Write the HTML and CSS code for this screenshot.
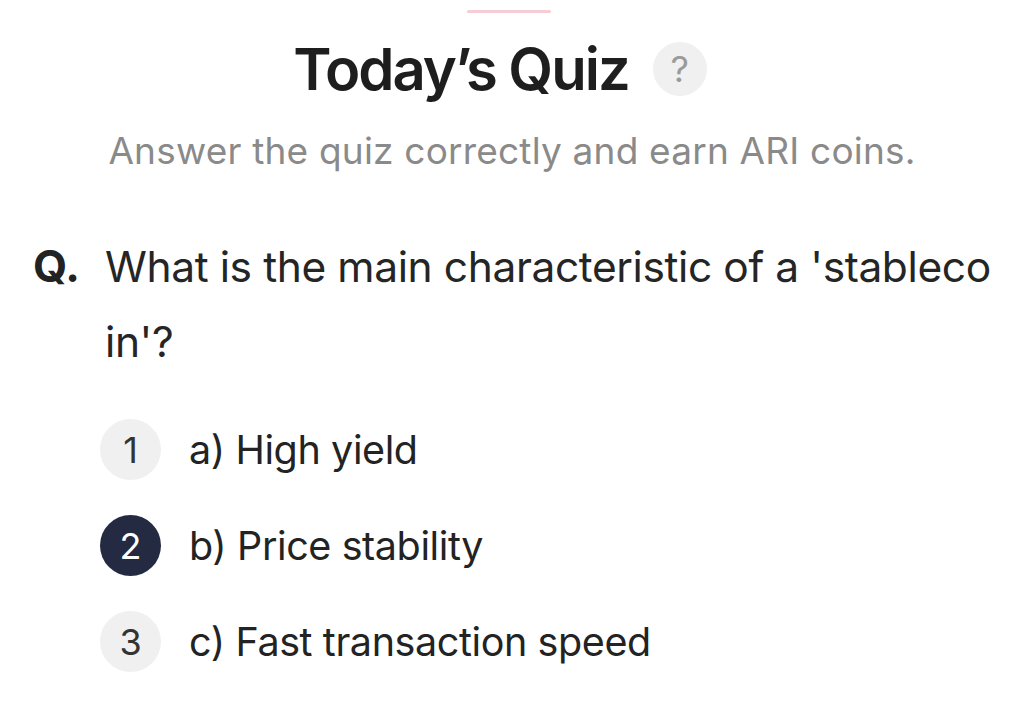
FILE: index.html
```html
<!DOCTYPE html>
<html lang="en">
<head>
<meta charset="utf-8">
<title>Today's Quiz</title>
<link rel="stylesheet" href="styles.css">
</head>
<body>
<div class="page">
  <div class="handle"></div>
  <header class="head">
    <div class="title-row">
      <h1 class="title">Today’s Quiz</h1>
      <span class="help">?</span>
    </div>
    <p class="subtitle">Answer the quiz correctly and earn ARI coins.</p>
  </header>
  <section class="question">
    <span class="q-mark">Q.</span>
    <p class="q-text">What is the main characteristic of a 'stablecoin'?</p>
  </section>
  <ul class="options">
    <li class="option"><span class="num">1</span><span class="opt-text">a) High yield</span></li>
    <li class="option selected"><span class="num">2</span><span class="opt-text">b) Price stability</span></li>
    <li class="option"><span class="num">3</span><span class="opt-text">c) Fast transaction speed</span></li>
  </ul>
</div>
</body>
</html>
```

FILE: styles.css
```css
* { box-sizing: border-box; }
html, body { margin: 0; padding: 0; background: #ffffff; }
body {
  font-family: Inter, "Noto Sans", "Liberation Sans", sans-serif;
  color: #222222;
  width: 1024px;
  height: 710px;
  overflow: hidden;
}
.page { display: flex; flex-direction: column; }
.handle {
  width: 84px;
  height: 3px;
  margin: 10px auto 0 467px;
  background: #f6cdd5;
  border-radius: 2px;
}
.head { display: flex; flex-direction: column; align-items: center; }
.title-row {
  display: flex;
  align-items: center;
  gap: 24px;
  margin-top: 23px;
  margin-right: 24px;
}
.title {
  margin: 0;
  font-size: 58px;
  font-weight: 600;
  letter-spacing: -2px;
  color: #1e1e1e;
  line-height: 66px;
}
.help {
  width: 54px;
  height: 54px;
  border-radius: 50%;
  background: #f0f0f0;
  color: #9a9a9a;
  font-size: 36px;
  display: flex;
  align-items: center;
  justify-content: center;
}
.subtitle {
  margin: 27px 0 0;
  font-size: 37px;
  line-height: 44px;
  color: #8a8a8a;
  letter-spacing: 0.2px;
}
.question {
  display: flex;
  align-items: flex-start;
  margin-top: 56px;
  padding-left: 33px;
  padding-right: 26px;
}
.q-mark {
  flex: 0 0 72px;
  font-size: 44px;
  font-weight: 700;
  line-height: 75px;
  color: #222;
}
.q-text {
  margin: 0;
  font-size: 42.5px;
  line-height: 75px;
  color: #252525;
  word-break: break-all;
  letter-spacing: -0.4px;
}
.options {
  list-style: none;
  margin: 40px 0 0;
  padding: 0 0 0 100px;
  display: flex;
  flex-direction: column;
  gap: 35px;
}
.option { display: flex; align-items: center; gap: 28px; }
.num {
  width: 61px;
  height: 61px;
  border-radius: 50%;
  background: #f0f0f0;
  color: #333;
  font-size: 36px;
  display: flex;
  align-items: center;
  justify-content: center;
}
.selected .num { background: #232a42; color: #ffffff; }
.opt-text {
  font-size: 39.5px;
  color: #232323;
  letter-spacing: -0.4px;
}
```
